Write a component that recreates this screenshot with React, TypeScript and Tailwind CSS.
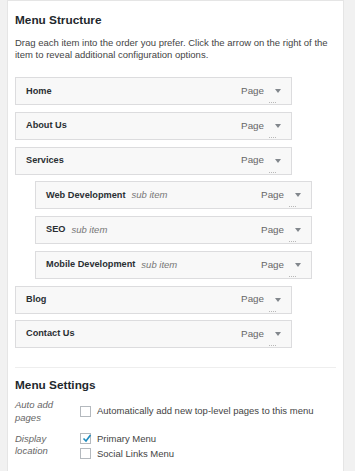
const items = [
  { title: "Home", depth: 0 },
  { title: "About Us", depth: 0 },
  { title: "Services", depth: 0 },
  { title: "Web Development", depth: 1 },
  { title: "SEO", depth: 1 },
  { title: "Mobile Development", depth: 1 },
  { title: "Blog", depth: 0 },
  { title: "Contact Us", depth: 0 },
];

const MenuItem = ({ title, depth }: { title: string; depth: number }) => (
  <div className={depth ? "pl-[20px]" : ""}>
    <div className="relative flex h-[28px] w-[277px] items-center border border-[#dcdcde] bg-[#f8f8f8] pl-[10px] pr-[10px]">
      <span className="text-[9.2px] font-bold text-[#2a2f33]">{title}</span>
      {depth > 0 && <span className="ml-[6px] text-[9.5px] italic text-[#777]">sub item</span>}
      <span className="ml-auto text-[9.8px] text-[#666]">Page</span>
      <svg className="ml-[11px]" width="6" height="4" viewBox="0 0 6 4">
        <polygon points="0,0 6,0 3,4" fill="#82878c" />
      </svg>
      {/* clipped edit link remnants */}
      <span className="absolute bottom-[1px] right-[15px] w-[7px] border-b border-dotted border-[#b8b8b8]" />
    </div>
  </div>
);

const Check = ({ checked }: { checked?: boolean }) => (
  <span className="relative flex h-[11px] w-[11px] shrink-0 border border-[#b4b9be] bg-white">
    {checked && (
      <svg className="absolute left-[1px] top-[0px]" width="10" height="9" viewBox="0 0 10 9">
        <path d="M1.5 4.5 L4 7 L8.5 1" stroke="#1e8cbe" strokeWidth="1.6" fill="none" />
      </svg>
    )}
  </span>
);

export default function App() {
  return (
    <div className="min-h-[471px] w-[355px] bg-[#f1f1f1] pl-[7px] pr-[11px] font-['Liberation_Sans',Arial,sans-serif]">
      <div className="min-h-[471px] border-x border-t border-[#e5e5e5] bg-white px-[7px] pt-[12px]">
        <h3 className="text-[11.8px] font-bold leading-[14px] text-[#23282d]">Menu Structure</h3>
        <p className="mt-[10px] text-[9.5px] leading-[11.7px] text-[#444]">
          Drag each item into the order you prefer. Click the arrow on the right of the item to reveal additional configuration options.
        </p>

        <div className="mt-[17px] flex flex-col gap-[6.7px]">
          {items.map((it) => (
            <MenuItem key={it.title} title={it.title} depth={it.depth} />
          ))}
        </div>

        <div className="mt-[19px] border-t border-[#eeeeee]" />

        <h3 className="mt-[10px] text-[11.8px] font-bold leading-[14px] text-[#23282d]">Menu Settings</h3>

        <div className="mt-[7px] flex text-[9.5px] leading-[12.3px]">
          <div className="w-[65px] shrink-0 pr-[15px] italic text-[#666]">Auto add pages</div>
          <label className="flex items-center gap-[6px] text-[#444]">
            <Check />
            <span>Automatically add new top-level pages to this menu</span>
          </label>
        </div>

        <div className="mt-[9px] flex text-[9.5px] leading-[12.3px]">
          <div className="w-[65px] shrink-0 pr-[15px] italic text-[#666]">Display location</div>
          <div className="flex flex-col gap-[2.4px]">
            <label className="flex items-center gap-[6px] text-[#444]">
              <Check checked />
              <span>Primary Menu</span>
            </label>
            <label className="flex items-center gap-[6px] text-[#444]">
              <Check />
              <span>Social Links Menu</span>
            </label>
          </div>
        </div>
      </div>
    </div>
  );
}
